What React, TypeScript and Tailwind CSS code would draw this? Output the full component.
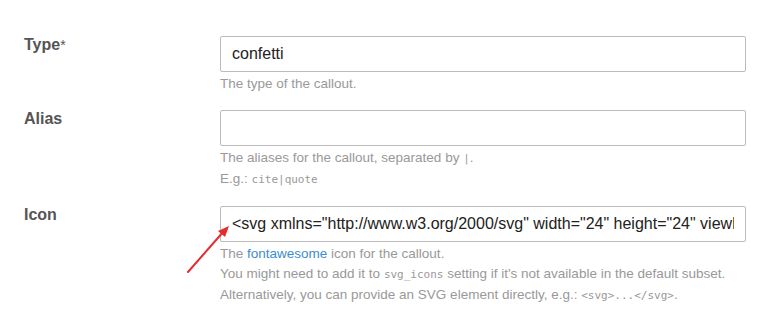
const code = "font-['DejaVu_Sans_Mono',monospace] text-[11px]";

const Field = ({
  label,
  required,
  value,
  children,
}: {
  label: string;
  required?: boolean;
  value: string;
  children: React.ReactNode;
}) => {
  return (
    <div className="flex items-start mb-4">
      <div className="w-[196px] text-[16px] leading-[18px] font-bold text-[#555]">
        {label}
        {required && <span className="font-normal text-[14px] align-top">*</span>}
      </div>
      <div className="w-[526px]">
        <input
          type="text"
          readOnly
          value={value}
          className="block w-full h-9 border border-[#bbb] rounded-[2px] pl-[11px] pr-[11px] text-[16px] text-[#222] outline-none bg-white font-['Liberation_Sans',Arial,sans-serif]"
        />
        <div className="mt-[2px] text-[13.5px] leading-5 text-[#999]">{children}</div>
      </div>
    </div>
  );
};

export default function App() {
  return (
    <div className="relative min-h-[315px] w-[777px] bg-white pt-9 pl-6 font-['Liberation_Sans',Arial,sans-serif]">
      <Field label="Type" required value="confetti">
        The type of the callout.
      </Field>
      <Field label="Alias" value="">
        <div>
          The aliases for the callout, separated by <span className={code}>|</span>.
        </div>
        <div>
          E.g.: <span className={code}>cite|quote</span>
        </div>
      </Field>
      <Field
        label="Icon"
        value={'<svg xmlns="http://www.w3.org/2000/svg" width="24" height="24" viewBox="0 0 24 24" fill="none">'}
      >
        <div>
          The <span className="text-[#3b8dd1]">fontawesome</span> icon for the callout.
        </div>
        <div>
          You might need to add it to <span className={code}>svg_icons</span> setting if it's not
          available in the default subset.
        </div>
        <div>
          Alternatively, you can provide an SVG element directly, e.g.:{" "}
          <span className={code}>&lt;svg&gt;...&lt;/svg&gt;</span>.
        </div>
      </Field>

      {/* red arrow pointing at the icon input */}
      <svg
        className="absolute left-0 top-0 pointer-events-none"
        width="777"
        height="315"
        viewBox="0 0 777 315"
      >
        <line x1="188" y1="272" x2="224" y2="231" stroke="#e52d2d" strokeWidth="2" strokeLinecap="round" />
        <polygon points="229,226 218,231 225,237" fill="#e52d2d" />
      </svg>
    </div>
  );
}
